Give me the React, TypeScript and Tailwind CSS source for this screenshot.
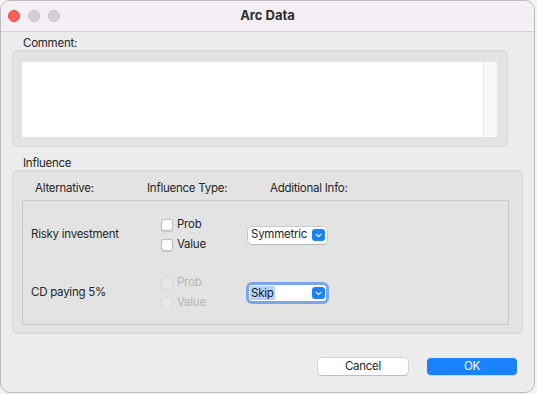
import { ChevronDown } from 'lucide-react'

const font = { fontFamily: 'Inter, "Liberation Sans", sans-serif' }

function Checkbox({ label, disabled = false }: { label: string; disabled?: boolean }) {
  return (
    <div className="flex items-center gap-[4px] h-[20px]">
      <div
        className={
          disabled
            ? 'w-[12px] h-[12px] rounded-[3px] border border-[#d8d8d8] bg-[#e7e7e7]'
            : 'w-[12px] h-[12px] rounded-[3px] border border-[#bdbdbd] bg-white shadow-[0_0.5px_1px_rgba(0,0,0,0.12)]'
        }
      />
      <span className={disabled ? 'text-[#b6b6b6]' : 'text-[#262626]'}>{label}</span>
    </div>
  )
}

function Select({ value, focused = false }: { value: string; focused?: boolean }) {
  const arrow = (
    <div className="w-[13px] h-[12px] rounded-[3px] bg-[#1a82fb] flex items-center justify-center shrink-0">
      <ChevronDown className="w-[9px] h-[9px] text-white" strokeWidth={3.5} />
    </div>
  )
  if (focused) {
    return (
      <div className="w-[83px] h-[22px] rounded-[6px] bg-[#7ba7ea] p-[3px] ml-[-2px]">
        <div className="w-full h-full bg-white rounded-[3px] flex items-center justify-between pl-[1px] pr-[1px]">
          <span className="bg-[#b3d3fd] text-[#1a1a1a] px-[1px] leading-[14px]">{value}</span>
          {arrow}
        </div>
      </div>
    )
  }
  return (
    <div className="w-[79px] h-[17px] rounded-[4px] bg-white shadow-[0_0_0_0.5px_rgba(0,0,0,0.22),0_1px_1px_rgba(0,0,0,0.1)] flex items-center justify-between pl-[3px] pr-[2px]">
      <span className="text-[#1e1e1e]">{value}</span>
      {arrow}
    </div>
  )
}

function Row({ name, disabled, value, focused }: { name: string; disabled?: boolean; value: string; focused?: boolean }) {
  return (
    <div className="flex items-center h-[42px]">
      <div className="w-[138px] pl-[8px] text-[#262626]">{name}</div>
      <div className="w-[87px] flex flex-col">
        <Checkbox label="Prob" disabled={disabled} />
        <Checkbox label="Value" disabled={disabled} />
      </div>
      <Select value={value} focused={focused} />
    </div>
  )
}

export default function App() {
  return (
    <div className="w-[537px] h-[394px] bg-[#f3f3f3] text-[11.5px] tracking-[-0.25px]" style={font}>
      <div className="w-[535px] h-[393px] rounded-[10px] border border-[#bcbcbc] bg-[#ececec] overflow-hidden flex flex-col">
        <div className="h-[31px] bg-[#f3eff5] border-b border-[#d5d3d6] flex items-center relative shrink-0">
          <div className="flex gap-[8px] pl-[7px]">
            <div className="w-[12px] h-[12px] rounded-full bg-[#fe5f57] border border-[#e5483f]" />
            <div className="w-[12px] h-[12px] rounded-full bg-[#d3d1d5] border border-[#c4c2c6]" />
            <div className="w-[12px] h-[12px] rounded-full bg-[#d3d1d5] border border-[#c4c2c6]" />
          </div>
          <div className="absolute inset-0 flex items-center justify-center font-bold text-[13px] tracking-normal text-[#2e2e2e]">
            Arc Data
          </div>
        </div>

        <div className="pl-[11px] pt-[4px] flex flex-col">
          <div className="h-[14px] leading-[14px] pl-[11px] text-[#262626]">Comment:</div>
          <div className="w-[496px] h-[97px] rounded-[5px] border border-[#d8d8d8] bg-[#e3e3e3] pt-[11px] pl-[9px]">
            <div className="w-[475px] h-[75px] bg-white flex justify-end">
              <div className="w-[14px] h-full bg-[#f8f8f8] border-l border-[#e8e8e8]" />
            </div>
          </div>

          <div className="h-[14px] leading-[14px] pl-[11px] mt-[9px] text-[#262626]">Influence</div>
          <div className="w-[511px] h-[164px] rounded-[5px] border border-[#d8d8d8] bg-[#e3e3e3] pl-[9px]">
            <div className="h-[29px] pt-[10px] leading-[14px] flex text-[#262626]">
              <div className="w-[125px] pl-[13px]">Alternative:</div>
              <div className="w-[123px]">Influence Type:</div>
              <div>Additional Info:</div>
            </div>
            <div className="w-[487px] h-[125px] border border-[#c9c9c9] pt-[13px]">
              <Row name="Risky investment" value="Symmetric" />
              <div className="h-[16px]" />
              <Row name="CD paying 5%" value="Skip" disabled focused />
            </div>
          </div>

          <div className="flex justify-end gap-[19px] pr-[17px] mt-[24px]">
            <button className="w-[90px] h-[17px] rounded-[4px] bg-white shadow-[0_0_0_0.5px_rgba(0,0,0,0.2),0_1px_1px_rgba(0,0,0,0.12)] text-[#262626] leading-[17px]">
              Cancel
            </button>
            <button className="w-[90px] h-[17px] rounded-[4px] bg-[#1a82fb] text-white leading-[17px] shadow-[0_1px_1px_rgba(0,0,0,0.12)]">
              OK
            </button>
          </div>
        </div>
      </div>
    </div>
  )
}
